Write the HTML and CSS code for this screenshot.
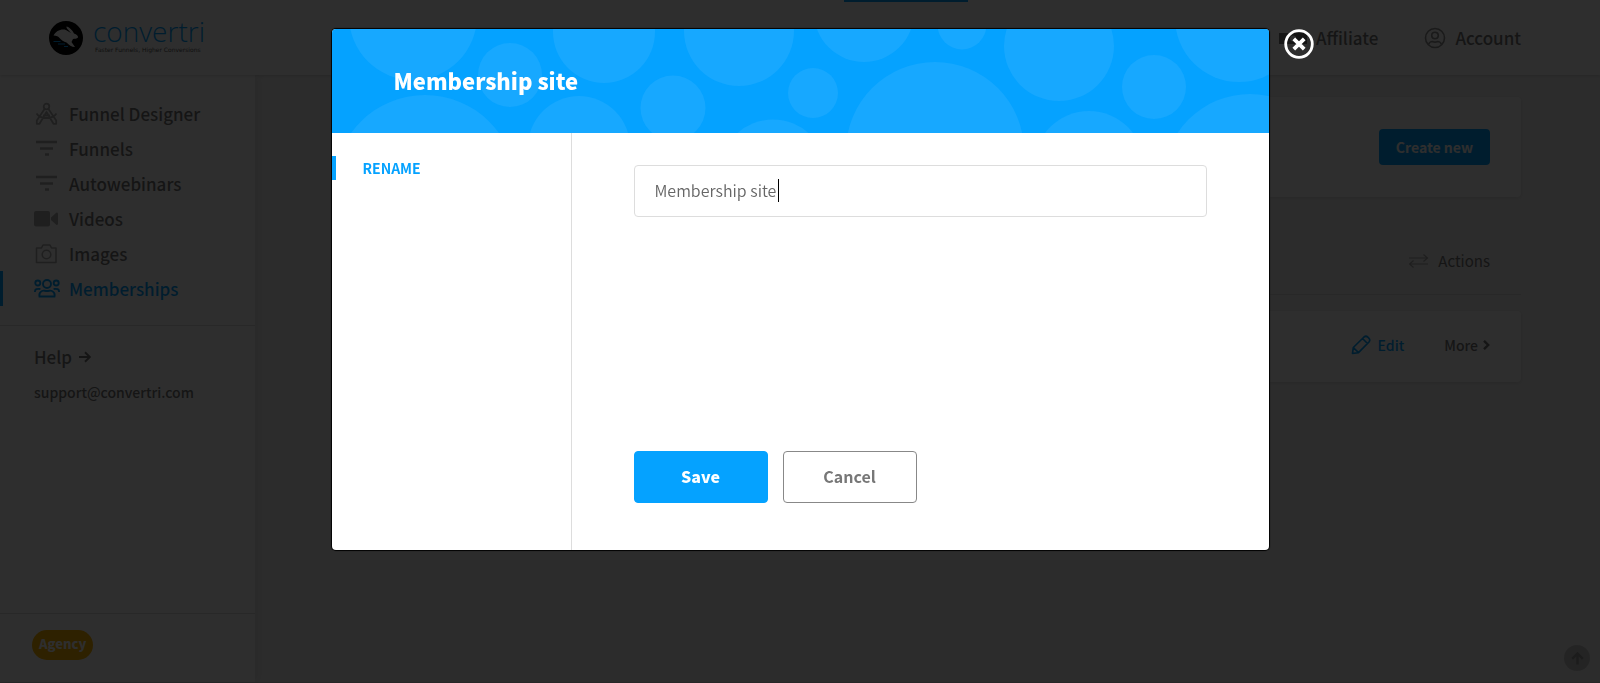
FILE: index.html
```
<!DOCTYPE html>
<html lang="en">
<head>
<meta charset="utf-8">
<title>Convertri - Memberships</title>
<link rel="stylesheet" href="styles.css">
</head>
<body>
<div class="app">
  <header class="topbar">
    <a class="logo" href="#">
      <svg class="logo-mark" viewBox="0 0 34 34" aria-hidden="true">
        <circle cx="17" cy="17" r="17" fill="#000"/>
        <path d="M4.500 14.500C7 10 12 7.500 17 9l5 3C20 9.500 17 7.500 17.500 5.500C20 6 23.500 9 25 12.500C27.500 13.500 29.500 15 29 16.500C28 18 25.500 17.500 24 18l-1.500 3 3.500 5c-3.500 0-6-2-8.500-4.500c-3-1-5-2.500-7-4.500c-1-1.500-3-2.500-6-2.500z" fill="#fff"/>
        <path d="M4.500 20.500h7M9 23h7M15 25.500h4" stroke="#05a2ff" stroke-width="1" fill="none"/>
      </svg>
      <span class="logo-text">
        <span class="logo-name">convertri</span>
        <span class="logo-tag">Faster Funnels, Higher Conversions</span>
      </span>
    </a>
    <span class="tab-marker"></span>
    <nav class="topnav">
      <a class="toplink" href="#">
        <svg width="28" height="22" viewBox="0 0 28 22" aria-hidden="true"><path fill-rule="evenodd" d="M0 6h28v11H0zM14 8.500a3 3 0 1 0 0 6a3 3 0 1 0 0-6z" fill="currentColor"/></svg>
        Affiliate
      </a>
      <a class="toplink" href="#">
        <svg class="soft" width="22" height="22" viewBox="0 0 22 22" fill="none" stroke="currentColor" stroke-width="1.600" aria-hidden="true"><circle cx="11" cy="11" r="9.500"/><circle cx="11" cy="8.500" r="3.300"/><path d="M4.500 17.500c1-3 3.500-3 4-3c1.500.8 3.500.8 5 0c.5 0 3 0 4 3"/></svg>
        Account
      </a>
    </nav>
  </header>

  <div class="columns">
    <aside class="sidebar">
      <nav class="sidenav">
        <a class="navitem" href="#">
          <svg viewBox="0 0 26 24" fill="none" stroke="currentColor" stroke-width="1.800" stroke-linejoin="round" aria-hidden="true"><circle cx="12.500" cy="4.500" r="2.800"/><path d="M10.700 6.700 2.800 18.500v3.300h2.700L12.500 10l7 11.800h2.700v-3.300L14.300 6.700M2.500 11.500c4 6 16 6 20 0M9 13.500h7"/></svg>
          Funnel Designer</a>
        <a class="navitem" href="#">
          <svg viewBox="0 0 26 24" stroke="currentColor" stroke-width="2.400" aria-hidden="true"><path d="M2 5h21M6 11.500h13M11 17.500h4"/></svg>
          Funnels</a>
        <a class="navitem" href="#">
          <svg viewBox="0 0 26 24" stroke="currentColor" stroke-width="2.400" aria-hidden="true"><path d="M2 5h21M6 11.500h13M11 17.500h4"/></svg>
          Autowebinars</a>
        <a class="navitem" href="#">
          <svg viewBox="0 0 26 24" fill="currentColor" aria-hidden="true"><rect x="0" y="4" width="16" height="15.500" rx="2"/><path d="M17 10.500 22.500 5.500q1.500 0 1.500 1v10.500q0 1-1.500 1L17 13z"/></svg>
          Videos</a>
        <a class="navitem" href="#">
          <svg viewBox="0 0 26 24" fill="none" stroke="currentColor" stroke-width="1.600" aria-hidden="true"><path d="M2.500 6h5l1.500-3h7l1.500 3h4.500v14.500H2.500z" stroke-linejoin="round"/><circle cx="12.500" cy="12.500" r="4.300"/></svg>
          Images</a>
        <a class="navitem active" href="#">
          <svg viewBox="0 0 26 24" fill="none" stroke="currentColor" stroke-width="1.900" aria-hidden="true"><circle cx="13" cy="7" r="4"/><circle cx="3.800" cy="6" r="2.500"/><circle cx="22.200" cy="6" r="2.500"/><path d="M8 14c1.500-1 2.500 0 5 0s3.500-1 5 0c2 1 3 3 2.500 5.500h-15c-.5-2.500.5-4.500 2.500-5.500zM.9 15c0-3 2-3.500 5.500-3M25.100 15c0-3-2-3.500-5.500-3"/></svg>
          Memberships</a>
      </nav>
      <div class="help">
        <a class="help-link" href="#">Help
          <svg width="12" height="12" viewBox="0 0 12 12" fill="none" stroke="currentColor" stroke-width="2" aria-hidden="true"><path d="M0 6h10.500M6 1.200 10.800 6 6 10.800"/></svg>
        </a>
        <a class="mail" href="#">support@convertri.com</a>
      </div>
      <div class="plan"><span class="badge">Agency</span></div>
    </aside>

    <main class="content">
      <section class="card create-card">
        <button class="create" type="button">Create new</button>
      </section>
      <div class="list-head">
        <svg class="faint" width="20" height="14" viewBox="0 0 20 14" fill="none" stroke="currentColor" stroke-width="1.200" aria-hidden="true"><path d="M0 4h18M14.500.5 18.500 4 14.500 7.500M19 10H1M4.500 6.500.5 10l4 3.500"/></svg>
        Actions
      </div>
      <section class="card row-card">
        <a class="edit" href="#">
          <svg width="20" height="20" viewBox="0 0 20 20" fill="none" stroke="currentColor" stroke-width="1.700" stroke-linejoin="round" aria-hidden="true"><path d="M1.500 18.500 2.300 12.500 13 2q2-1.500 3.700 0l1.300 1.300Q19.500 5 18 7L7.500 17.700zM11.500 3.500l5 5M2.300 12.500l5.200 5.200"/></svg>
          Edit</a>
        <a class="more" href="#">More
          <svg width="7" height="10" viewBox="0 0 7 10" fill="none" stroke="currentColor" stroke-width="2.400" aria-hidden="true"><path d="M1 .8 5.200 5 1 9.200"/></svg>
        </a>
      </section>
    </main>
  </div>
  <button class="to-top" type="button" aria-label="Back to top">
    <svg width="13" height="13" viewBox="0 0 13 13" fill="none" stroke="currentColor" stroke-width="2.400" aria-hidden="true"><path d="M6.500 12.500V2M1.200 6.800 6.500 1.500l5.300 5.300"/></svg>
  </button>
</div>

<div class="overlay">
  <div class="modal" role="dialog" aria-labelledby="modal-title">
    <div class="modal-head">
      <svg class="bubbles" viewBox="0 0 937 104" preserveAspectRatio="xMidYMid slice" aria-hidden="true">
        <circle cx="81" cy="-13" r="64"/><circle cx="178" cy="46" r="32"/><circle cx="272" cy="3" r="51"/><circle cx="407" cy="2" r="55"/>
        <circle cx="93" cy="157" r="91"/><circle cx="247" cy="118" r="51"/><circle cx="341" cy="79" r="32.500"/><circle cx="481" cy="64" r="25"/>
        <circle cx="441" cy="144" r="53.500"/><circle cx="532" cy="-17" r="50"/><circle cx="630" cy="-4" r="24.400"/><circle cx="603" cy="122" r="89"/>
        <circle cx="727" cy="17" r="55"/><circle cx="822" cy="58" r="32"/><circle cx="757" cy="137" r="55"/><circle cx="907" cy="-11" r="64"/><circle cx="918" cy="152" r="87"/>
      </svg>
      <h1 class="modal-title" id="modal-title">Membership site</h1>
    </div>
    <div class="modal-body">
      <nav class="modal-tabs"><a class="modal-tab" href="#">RENAME</a></nav>
      <form class="modal-form">
        <div class="field">
          <input class="name" type="text" value="Membership site" aria-label="Membership site name">
          <span class="caret"></span>
        </div>
        <div class="actions">
          <button class="btn save" type="button">Save</button>
          <button class="btn cancel" type="button">Cancel</button>
        </div>
      </form>
    </div>
    <button class="close" type="button" aria-label="Close">
      <svg width="30" height="30" viewBox="0 0 30 30" fill="none" stroke="#fff" aria-hidden="true"><circle cx="15" cy="15" r="13.300" stroke-width="2.800"/><path d="M9.800 9.800 20.200 20.200M20.200 9.800 9.800 20.200" stroke-width="3.800"/></svg>
    </button>
  </div>
</div>
</body>
</html>
```
FILE: styles.css
```
* { box-sizing: border-box; }
body {
  margin: 0;
  font-family: "Source Sans Pro", "Noto Sans CJK SC", "Noto Sans", sans-serif;
  font-size: 16px;
  line-height: 24px;
  color: #777;
}
a { color: inherit; text-decoration: none; }
button, input { font: inherit; }
svg { flex: none; display: block; }

.app {
  min-height: 100vh;
  display: flex;
  flex-direction: column;
  background: #f3f3f3;
  border-bottom: 1px solid #d8d8d8;
}

.topbar {
  height: 75px;
  display: flex;
  align-items: center;
  padding: 0 79px 0 49px;
  background: #fff;
  box-shadow: 0 1px 3px rgba(0, 0, 0, .15);
  position: relative;
}
.logo { display: flex; gap: 10px; align-items: center; }
.logo-mark { width: 34px; height: 34px; }
.logo-text { display: flex; flex-direction: column; padding-bottom: 6px; }
.logo-name { font: 300 28px/30px "Open Sans", sans-serif; color: #05a2ff; }
.logo-tag { font: 6px/8px "DejaVu Sans", sans-serif; color: #555; padding-left: 2px; }
.tab-marker {
  align-self: flex-start;
  width: 124px;
  height: 2px;
  margin: 0 311px 0 auto;
  background: #05a2ff;
}
.topnav { display: flex; gap: 46px; }
.toplink { display: flex; align-items: center; gap: 9px; font-size: 17px; font-weight: 500; }
.toplink .soft { opacity: .8; }

.columns { flex: 1; display: flex; }
.sidebar {
  width: 255px;
  display: flex;
  flex-direction: column;
  background: #fff;
  box-shadow: 4px 0 8px rgba(0, 0, 0, .06);
}
.sidenav { padding: 21px 0 19px; border-bottom: 1px solid #ddd; }
.navitem {
  height: 35px;
  display: flex;
  align-items: center;
  gap: 9px;
  padding-left: 34px;
  font-size: 17px;
  font-weight: 500;
}
.navitem svg { width: 26px; height: 24px; opacity: .6; }
.navitem.active { color: #05a2ff; border-left: 3px solid #05a2ff; padding-left: 31px; }
.navitem.active svg { opacity: 1; }
.help { padding: 19px 34px; display: flex; flex-direction: column; gap: 11px; font-weight: 500; }
.help-link { display: flex; align-items: center; gap: 7px; font-size: 17px; }
.mail { font-size: 14px; }
.plan { margin-top: auto; padding: 16px 32px 22px; border-top: 1px solid #ddd; }
.badge {
  display: inline-block;
  padding: 0 7px 2px;
  border-radius: 15px;
  background: #ffb400;
  color: #fff;
  font-size: 13px;
  font-weight: 900;
  line-height: 28px;
}

.content { flex: 1; padding: 22px 79px; }
.card {
  display: flex;
  align-items: center;
  justify-content: flex-end;
  background: #fff;
  border-radius: 4px;
  box-shadow: 0 1px 4px rgba(0, 0, 0, .1);
  padding-right: 31px;
}
.create-card { height: 100px; }
.create {
  height: 36px;
  padding: 0 17px;
  border: 0;
  border-radius: 4px;
  background: #05a2ff;
  color: #fff;
  font-size: 14px;
  font-weight: 700;
}
.list-head {
  display: flex;
  align-items: center;
  justify-content: flex-end;
  gap: 9px;
  padding: 52px 31px 21px;
  border-bottom: 1px solid #ddd;
  margin-bottom: 16px;
  font-size: 15px;
}
.faint { opacity: .6; }
.row-card { height: 71px; gap: 40px; padding-bottom: 3px; font-size: 14px; font-weight: 500; }
.edit { display: flex; align-items: center; gap: 7px; color: #05a2ff; }
.more { display: flex; align-items: center; gap: 5px; }
.to-top {
  position: fixed;
  right: 10px;
  bottom: 12px;
  width: 26px;
  height: 26px;
  padding: 0;
  display: flex;
  align-items: center;
  justify-content: center;
  border: 0;
  border-radius: 50%;
  background: #c8c8c8;
  color: #999;
}

.overlay {
  position: fixed;
  inset: 0;
  display: flex;
  align-items: flex-start;
  justify-content: center;
  padding-top: 29px;
  background: rgba(0, 0, 0, .82);
}
.modal {
  position: relative;
  width: 937px;
  max-width: 90%;
  border-radius: 4px;
  background: #fff;
  box-shadow: 0 0 1px 1px #000;
}
.modal-head {
  position: relative;
  overflow: hidden;
  padding: 35px 62px 37px;
  border-radius: 4px 4px 0 0;
  background: #05a2ff;
}
.bubbles { position: absolute; inset: 0; width: 100%; height: 100%; fill: #17a8ff; }
.modal-title { position: relative; margin: 0; color: #fff; font-size: 22px; line-height: 32px; font-weight: 900; }
.modal-body { display: flex; }
.modal-tabs { width: 240px; padding-top: 23px; border-right: 1px solid #ddd; }
.modal-tab {
  display: block;
  padding-left: 27px;
  border-left: 4px solid #05a2ff;
  color: #05a2ff;
  font-size: 14px;
  font-weight: 700;
}
.modal-form {
  flex: 1;
  display: flex;
  flex-direction: column;
  justify-content: space-between;
  min-height: 417px;
  padding: 32px 62px 47px;
}
.field { position: relative; }
.name {
  display: block;
  width: 100%;
  height: 52px;
  padding: 0 20px 2px;
  border: 1px solid #ddd;
  border-radius: 4px;
  background: #fff;
  color: #666;
  font-size: 16px;
  font-weight: 350;
}
.caret { position: absolute; left: 144px; top: 14px; width: 1px; height: 23px; background: #000; }
.actions { display: flex; gap: 15px; }
.btn {
  width: 134px;
  height: 52px;
  padding: 0 0 2px;
  border: 1px solid #05a2ff;
  border-radius: 4px;
  font-size: 16px;
  font-weight: 700;
}
.save { background: #05a2ff; color: #fff; font-weight: 900; }
.cancel { background: #fff; border-color: #888; color: #777; }
.close {
  position: absolute;
  left: 100%;
  top: 0;
  margin-left: 15px;
  padding: 0;
  border: 0;
  background: none;
}
```
